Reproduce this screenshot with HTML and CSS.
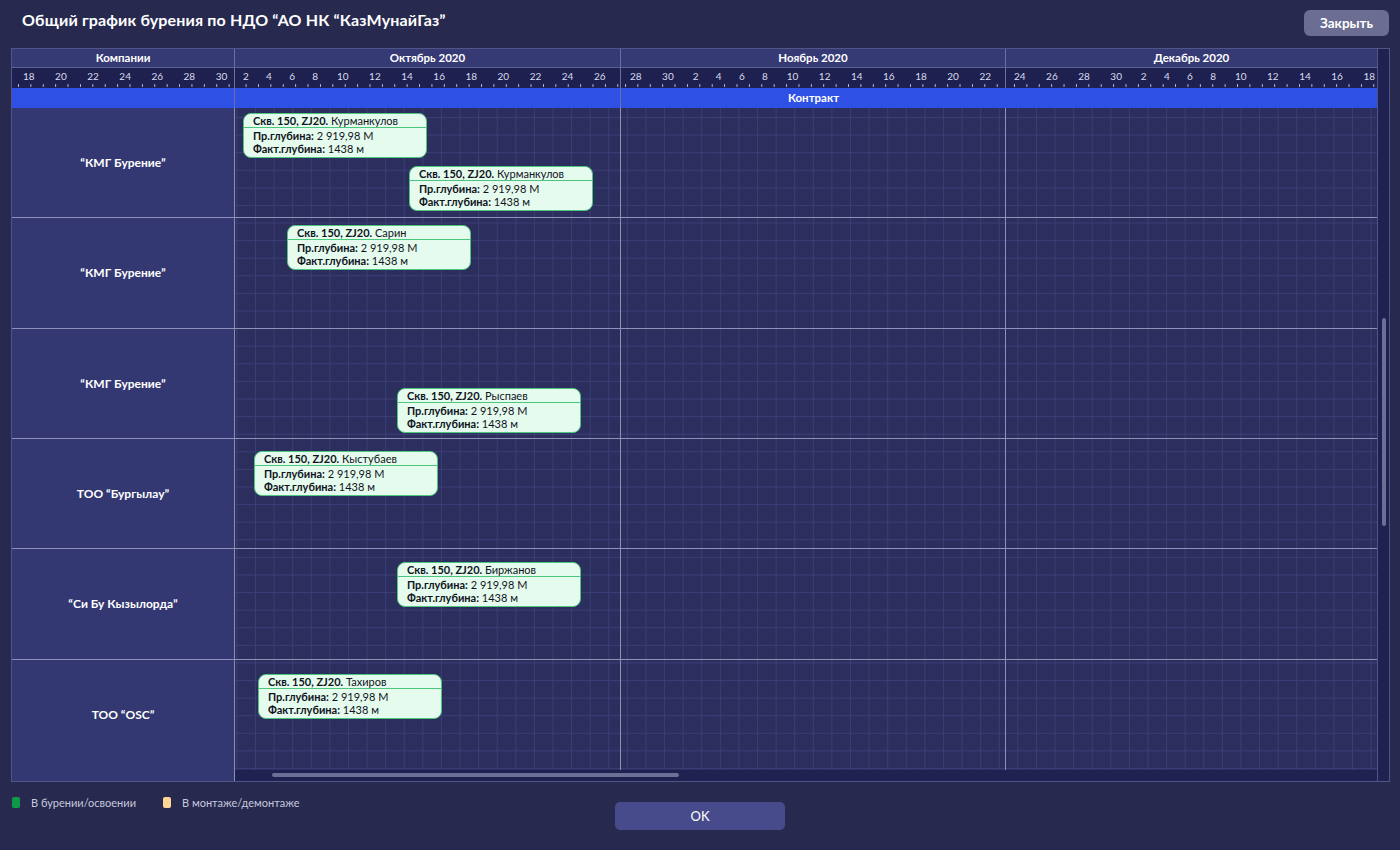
FILE: index.html
```html
<!DOCTYPE html>
<html lang="ru">
<head>
<meta charset="utf-8">
<title>Общий график бурения</title>
<link rel="stylesheet" href="styles.css">
</head>
<body>
<div class="modal">
  <header class="topbar">
    <h1 class="title">Общий график бурения по НДО “АО НК “КазМунайГаз”</h1>
    <button class="btn-close" type="button">Закрыть</button>
  </header>

  <section class="chart">
    <div class="chart-main">
      <div class="row-months">
        <div class="col-company">Компании</div>
        <div class="col-oct">Октябрь 2020</div>
        <div class="col-nov">Ноябрь 2020</div>
        <div class="col-dec">Декабрь 2020</div>
      </div>
      <div class="row-days">
        <div class="col-company days days-company"><span>18</span><span>20</span><span>22</span><span>24</span><span>26</span><span>28</span><span>30</span></div>
        <div class="col-oct days days-oct"><span class="s">2</span><span class="s">4</span><span class="s">6</span><span class="s">8</span><span>10</span><span>12</span><span>14</span><span>16</span><span>18</span><span>20</span><span>22</span><span>24</span><span>26</span></div>
        <div class="col-nov days days-nov"><span>28</span><span>30</span><span class="s">2</span><span class="s">4</span><span class="s">6</span><span class="s">8</span><span>10</span><span>12</span><span>14</span><span>16</span><span>18</span><span>20</span><span>22</span></div>
        <div class="col-dec days days-dec"><span>24</span><span>26</span><span>28</span><span>30</span><span class="s">2</span><span class="s">4</span><span class="s">6</span><span class="s">8</span><span>10</span><span>12</span><span>14</span><span>16</span><span>18</span></div>
      </div>
      <div class="row-contract">
        <div class="col-company"></div>
        <div class="col-oct"></div>
        <div class="col-nov">Контракт</div>
        <div class="col-dec"></div>
      </div>

      <div class="body">
        <div class="companies">
          <div class="company">“КМГ Бурение”</div>
          <div class="company">“КМГ Бурение”</div>
          <div class="company">“КМГ Бурение”</div>
          <div class="company">ТОО “Бургылау”</div>
          <div class="company">“Си Бу Кызылорда”</div>
          <div class="company company-last">ТОО “OSC”</div>
        </div>
        <div class="timeline-wrap">
          <div class="timeline">
            <div class="tl-row"></div>
            <div class="tl-row"></div>
            <div class="tl-row"></div>
            <div class="tl-row"></div>
            <div class="tl-row"></div>
            <div class="tl-row tl-row-last"></div>

            <div class="tl-months">
              <div class="tl-oct"></div>
              <div class="tl-nov"></div>
            </div>

            <div class="card" style="left:8px;top:5px">
              <div class="card-head"><b>Скв. 150, ZJ20.</b> Курманкулов</div>
              <div class="card-body">
                <div><b>Пр.глубина:</b> 2 919,98 М</div>
                <div><b>Факт.глубина:</b> 1438 м</div>
              </div>
            </div>
            <div class="card" style="left:174px;top:58px">
              <div class="card-head"><b>Скв. 150, ZJ20.</b> Курманкулов</div>
              <div class="card-body">
                <div><b>Пр.глубина:</b> 2 919,98 М</div>
                <div><b>Факт.глубина:</b> 1438 м</div>
              </div>
            </div>
            <div class="card" style="left:52px;top:117px">
              <div class="card-head"><b>Скв. 150, ZJ20.</b> Сарин</div>
              <div class="card-body">
                <div><b>Пр.глубина:</b> 2 919,98 М</div>
                <div><b>Факт.глубина:</b> 1438 м</div>
              </div>
            </div>
            <div class="card" style="left:162px;top:280px">
              <div class="card-head"><b>Скв. 150, ZJ20.</b> Рыспаев</div>
              <div class="card-body">
                <div><b>Пр.глубина:</b> 2 919,98 М</div>
                <div><b>Факт.глубина:</b> 1438 м</div>
              </div>
            </div>
            <div class="card" style="left:19px;top:343px">
              <div class="card-head"><b>Скв. 150, ZJ20.</b> Кыстубаев</div>
              <div class="card-body">
                <div><b>Пр.глубина:</b> 2 919,98 М</div>
                <div><b>Факт.глубина:</b> 1438 м</div>
              </div>
            </div>
            <div class="card" style="left:162px;top:454px">
              <div class="card-head"><b>Скв. 150, ZJ20.</b> Биржанов</div>
              <div class="card-body">
                <div><b>Пр.глубина:</b> 2 919,98 М</div>
                <div><b>Факт.глубина:</b> 1438 м</div>
              </div>
            </div>
            <div class="card" style="left:23px;top:566px">
              <div class="card-head"><b>Скв. 150, ZJ20.</b> Тахиров</div>
              <div class="card-body">
                <div><b>Пр.глубина:</b> 2 919,98 М</div>
                <div><b>Факт.глубина:</b> 1438 м</div>
              </div>
            </div>
          </div>
          <div class="hscroll"><div class="hthumb"></div></div>
        </div>
      </div>
    </div>
    <div class="vscroll"><div class="vthumb"></div></div>
  </section>

  <footer class="footer">
    <div class="legend">
      <div class="legend-item"><span class="swatch swatch-green"></span>В бурении/освоении</div>
      <div class="legend-item"><span class="swatch swatch-beige"></span>В монтаже/демонтаже</div>
    </div>
    <button class="btn-ok" type="button">OK</button>
    <div></div>
  </footer>
</div>
</body>
</html>
```

FILE: styles.css
```css
* { box-sizing: border-box; margin: 0; padding: 0; }

html, body { width: 1400px; height: 850px; overflow: hidden; }

body {
  background: #28294f;
  font-family: Lato, "Noto Sans", sans-serif;
  color: #fff;
}

.modal { display: flex; flex-direction: column; height: 850px; }

/* top bar */
.topbar {
  height: 48px;
  display: flex;
  justify-content: space-between;
  align-items: flex-start;
  padding: 0 11px 0 22px;
}
.title {
  font-size: 16px;
  font-weight: 700;
  line-height: 20px;
  margin-top: 10px;
  letter-spacing: 0.15px;
}
.btn-close {
  margin-top: 10px;
  width: 85px;
  height: 26px;
  border: 0;
  border-radius: 6px;
  background: #6b6e92;
  color: #fff;
  font: 700 13.5px Lato, "Noto Sans", sans-serif;
}

/* chart */
.chart {
  margin-left: 11px;
  width: 1379px;
  height: 734px;
  border: 1px solid #4f5489;
  display: flex;
}
.chart-main { flex: 1; display: flex; flex-direction: column; min-width: 0; }

.col-company { width: 223px; flex: none; }
.col-oct { width: 386px; flex: none; }
.col-nov { width: 385px; flex: none; }
.col-dec { flex: 1; min-width: 0; }

.row-months {
  height: 19px;
  display: flex;
  background: #363a74;
  border-bottom: 1px solid #5d6196;
  font-size: 11.5px;
  font-weight: 700;
  line-height: 18px;
  text-align: center;
}
.row-months > div { border-right: 1px solid #6a6ea0; }
.row-months > .col-dec { border-right: 0; }

.row-days {
  height: 20px;
  display: flex;
  background: #1e2150;
}
.row-days > div { border-right: 1px solid #6a6ea0; }
.row-days > .col-dec { border-right: 0; }

.days {
  display: flex;
  gap: 20.5px;
  font-size: 10px;
  line-height: 16px;
  color: #d9dbef;
  white-space: nowrap;
  overflow: hidden;
  background-image: linear-gradient(to right, #b3b6d4 0 1px, transparent 1px);
  background-size: 12.4px 3px;
  background-repeat: repeat-x;
}
.days .s { margin: 0 -1.6px; }
.days-company { padding-left: 11px; background-position: 6px calc(100% - 1px); }
.days-oct { padding-left: 9.5px; background-position: 10.6px calc(100% - 1px); }
.days-nov { padding-left: 9px; background-position: 4px calc(100% - 1px); }
.days-dec { padding-left: 8px; background-position: 8px calc(100% - 1px); }

.row-contract {
  height: 20px;
  display: flex;
  background: #2e50e4;
  font-size: 11.5px;
  font-weight: 700;
  line-height: 20px;
  text-align: center;
}
.row-contract > .col-company,
.row-contract > .col-oct { border-right: 1px solid #6a6ea0; }

/* body */
.body { flex: 1; display: flex; min-height: 0; }

.companies {
  width: 223px;
  flex: none;
  display: flex;
  flex-direction: column;
  background: #343872;
  border-right: 1px solid #8a8eb5;
}
.company {
  height: 110.33px;
  flex: none;
  display: flex;
  align-items: center;
  justify-content: center;
  border-bottom: 1px solid #8e92b8;
  font-size: 12px;
  font-weight: 700;
}
.company-last { flex: 1; height: auto; border-bottom: 0; padding-bottom: 11px; }

.timeline-wrap { flex: 1; display: flex; flex-direction: column; min-width: 0; }

.timeline {
  position: relative;
  flex: 1;
  display: flex;
  flex-direction: column;
  background-color: #2c2e5e;
  background-image:
    linear-gradient(to right, #3a3e76 0 1px, transparent 1px),
    linear-gradient(to bottom, #3a3e76 0 1px, transparent 1px);
  background-size: 18.6px 100%, 100% 17.6px;
  background-position: 20px 0, 0 9px;
  overflow: hidden;
}
.tl-row { height: 110.33px; flex: none; border-bottom: 1px solid #8e92b8; }
.tl-row-last { flex: 1; height: auto; border-bottom: 0; }

.tl-months { position: absolute; inset: 0; display: flex; pointer-events: none; }
.tl-oct { width: 386px; border-right: 1px solid #8e92b8; }
.tl-nov { width: 385px; border-right: 1px solid #8e92b8; }

.card {
  position: absolute;
  width: 184px;
  height: 45px;
  background: #e5fbee;
  border: 1px solid #4cc57d;
  border-radius: 8px;
  color: #10131c;
  font-size: 11px;
  line-height: 13px;
  white-space: nowrap;
  overflow: hidden;
}
.card-head { height: 14px; padding: 0 9px; border-bottom: 1px solid #4cc57d; }
.card-body { padding: 1px 9px 0; }
.card b { font-weight: 700; }

.hscroll { height: 11px; flex: none; background: #1f2250; padding-top: 3px; }
.hthumb { margin-left: 37px; width: 407px; height: 4px; border-radius: 2px; background: #6c6f96; }

.vscroll {
  width: 12px;
  flex: none;
  border-left: 1px solid #4f5489;
  background: #1f2250;
  padding-top: 269px;
}
.vthumb { margin-left: 4px; width: 4px; height: 208px; border-radius: 2px; background: #6c6f96; }

/* footer */
.footer {
  display: grid;
  grid-template-columns: 1fr 170px 1fr;
  align-items: start;
  padding-top: 15px;
}
.legend { display: flex; gap: 27px; padding-left: 12px; }
.legend-item {
  display: flex;
  align-items: center;
  gap: 11px;
  font-size: 11px;
  color: #c6c8de;
  line-height: 11px;
}
.swatch { width: 8px; height: 11px; border-radius: 2px; display: inline-block; }
.swatch-green { background: #0c9a47; }
.swatch-beige { background: #fdd598; }

.btn-ok {
  margin-top: 5px;
  width: 170px;
  height: 28px;
  border: 0;
  border-radius: 5px;
  background: #484b8b;
  color: #fff;
  font: 400 13px Lato, "Noto Sans", sans-serif;
}
```
